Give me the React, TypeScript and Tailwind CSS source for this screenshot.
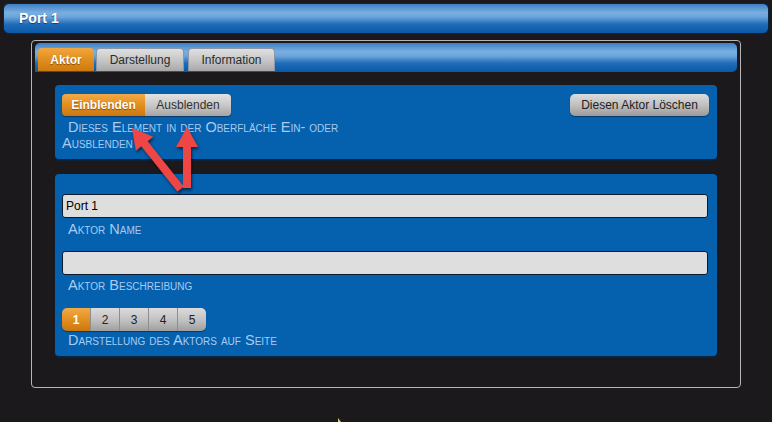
import React from "react";

const hdrGrad =
  "bg-[linear-gradient(180deg,#3d7fc4_0%,#79afe0_30%,#6aa4da_45%,#1f6cb8_70%,#0a59a8_100%)]";

function Label({ children, className = "" }: { children: React.ReactNode; className?: string }) {
  return (
    <div
      className={
        "text-[14.5px] leading-[16px] text-[#a7cbf1] [font-variant:small-caps] font-['Liberation_Sans',Arial,sans-serif] " +
        className
      }
    >
      {children}
    </div>
  );
}

export default function App() {
  return (
    <div className="relative h-[422px] w-full overflow-hidden bg-[#1b191c] font-['Liberation_Sans',Arial,sans-serif] pt-[3px]">
      {/* header */}
      <div
        className={
          "mx-[3px] h-[31px] rounded-[6px] border border-[#0b2642] flex items-center pl-[15px] " + hdrGrad
        }
      >
        <span className="text-[14px] font-bold text-white [text-shadow:0_1px_1px_#1a3c66]">Port 1</span>
      </div>

      {/* frame */}
      <div className="ml-[31px] mt-[6px] w-[710px] h-[348px] rounded-[4px] border border-[#b5b5b5] px-[3px] pt-[2px]">
        {/* tab bar */}
        <div className={"h-[29px] rounded-[5px] rounded-bl-none flex items-end pl-[3px] gap-[2px] " + hdrGrad}>
          <div className="mb-[1px] h-[23px] w-[56px] rounded-t-[4px] bg-[linear-gradient(180deg,#f2a640_0%,#e08f1e_50%,#cf7a10_100%)] flex items-center justify-center text-[12px] font-bold text-white [text-shadow:0_1px_1px_#8a4a00]">
            Aktor
          </div>
          <div className="mb-[1px] h-[23px] w-[88px] rounded-t-[4px] bg-[linear-gradient(180deg,#e0e0e0_0%,#c4c4c4_55%,#a8a8a8_100%)] border-x border-t border-[#8b97a6] flex items-center justify-center text-[12px] text-[#2a2a2a]">
            Darstellung
          </div>
          <div className="mb-[1px] ml-[2px] h-[23px] w-[87px] rounded-t-[4px] bg-[linear-gradient(180deg,#e0e0e0_0%,#c4c4c4_55%,#a8a8a8_100%)] border-x border-t border-[#8b97a6] flex items-center justify-center text-[12px] text-[#2a2a2a]">
            Information
          </div>
        </div>

        {/* panel 1 */}
        <div className="ml-[20px] mt-[13px] w-[662px] h-[74px] rounded-[4px] bg-[#0560ad] shadow-[0_2px_2px_#0a2540] px-[7px] pt-[9px]">
          <div className="flex justify-between">
            <div className="flex h-[22px] rounded-[4px] overflow-hidden shadow-[0_1px_1px_#0a3a6a]">
              <div className="w-[83px] flex items-center justify-center bg-[linear-gradient(180deg,#f3a944_0%,#e38f20_50%,#cc770e_100%)] text-[12px] font-bold text-white [text-shadow:0_1px_1px_#8a4a00]">
                Einblenden
              </div>
              <div className="w-[86px] flex items-center justify-center bg-[linear-gradient(180deg,#e2e2e2_0%,#c6c6c6_55%,#a4a4a4_100%)] text-[12px] text-[#333]">
                Ausblenden
              </div>
            </div>
            <div className="mr-[1px] w-[139px] h-[22px] rounded-[5px] flex items-center justify-center bg-[linear-gradient(180deg,#dcdcdc_0%,#bdbdbd_55%,#9a9a9a_100%)] shadow-[0_1px_1px_#0a3a6a] text-[12px] text-[#222]">
              Diesen Aktor Löschen
            </div>
          </div>
          <Label className="mt-[3px] w-[310px] indent-[6px]">
            Dieses Element in der Oberfläche Ein- oder Ausblenden
          </Label>
        </div>

        {/* panel 2 */}
        <div className="ml-[20px] mt-[15px] w-[662px] h-[182px] rounded-[4px] bg-[#0560ad] shadow-[0_2px_2px_#0a2540] px-[7px] pt-[20px]">
          <div className="h-[24px] w-[646px] rounded-[3px] border border-[#0b1a2c] bg-[#dedede] flex items-center pl-[3px] text-[12px] text-black">
            Port 1
          </div>
          <Label className="mt-[3px] pl-[6px]">Aktor Name</Label>
          <div className="mt-[14px] h-[24px] w-[646px] rounded-[3px] border border-[#0b1a2c] bg-[#dedede]" />
          <Label className="mt-[2px] pl-[6px]">Aktor Beschreibung</Label>
          <div className="mt-[15px] flex h-[23px] w-[144px] rounded-[5px] overflow-hidden shadow-[0_1px_1px_#0a3a6a]">
            <div className="w-[28px] flex items-center justify-center bg-[linear-gradient(180deg,#f3a944_0%,#e38f20_50%,#cc770e_100%)] text-[12px] font-bold text-white">
              1
            </div>
            {["2", "3", "4", "5"].map((n) => (
              <div
                key={n}
                className="flex-1 flex items-center justify-center border-l border-[#8e8e8e] bg-[linear-gradient(180deg,#dcdcdc_0%,#c0c0c0_55%,#9e9e9e_100%)] text-[12px] text-[#222]"
              >
                {n}
              </div>
            ))}
          </div>
          <Label className="mt-[1px] pl-[6px]">Darstellung des Aktors auf Seite</Label>
        </div>
      </div>

      {/* annotation arrows */}
      <svg className="absolute left-0 top-0 pointer-events-none" width="772" height="422">
        <defs>
          <filter id="sh" x="-20%" y="-20%" width="140%" height="140%">
            <feDropShadow dx="1" dy="2" stdDeviation="1.5" floodColor="#000" floodOpacity="0.6" />
          </filter>
        </defs>
        <g fill="#ee4444" filter="url(#sh)">
          <g transform="translate(132,128) rotate(-38.5)">
            <polygon points="0,0 -11,20 -4,20 -4,78 4,78 4,20 11,20" />
          </g>
          <polygon points="187,127 176,147 183,147 183,188 191,188 191,147 198,147" />
        </g>
        <polygon points="338,418 338,422 341,422" fill="#d8d85a" />
      </svg>
    </div>
  );
}
